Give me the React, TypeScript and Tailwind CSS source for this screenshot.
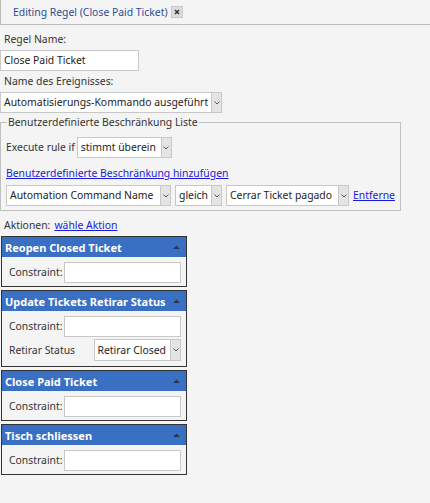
import React from "react";

const font = { fontFamily: '"Noto Sans", "Open Sans", sans-serif' };

function Arrow() {
  return (
    <span className="flex h-full w-[10px] items-center justify-center border-l border-[#c8c8c8] bg-[#e4e4e4]">
      <svg width="6" height="4" viewBox="0 0 6 4">
        <path d="M0.5 0.5 L3 3 L5.5 0.5" fill="none" stroke="#555" strokeWidth="1" />
      </svg>
    </span>
  );
}

function Select({ text, className }: { text: string; className: string }) {
  return (
    <div className={`flex h-[21px] items-stretch border border-[#c8c8c8] bg-white ${className}`}>
      <span className="flex flex-1 items-center overflow-hidden whitespace-nowrap pl-[3px] text-[#222]">{text}</span>
      <Arrow />
    </div>
  );
}

function Input({ text, className }: { text?: string; className: string }) {
  return (
    <div className={`flex h-[21px] items-center border border-[#c8c8c8] bg-white pl-[3px] text-[#222] ${className}`}>
      {text}
    </div>
  );
}

function Panel({ title, children, bodyClass }: { title: string; children: React.ReactNode; bodyClass: string }) {
  return (
    <div className="w-[186px] border border-[#333] bg-[#f4f4f4]">
      <div className="flex h-[20px] items-center justify-between bg-[#3a70c4] pl-[3px] pr-[6px] text-[11px] font-bold text-white">
        <span>{title}</span>
        <svg width="7" height="4" viewBox="0 0 7 4">
          <path d="M0 4 L3.5 0.5 L7 4 Z" fill="#2a3550" />
        </svg>
      </div>
      <div className={`flex flex-col gap-[2px] px-[5px] pt-[5px] ${bodyClass}`}>{children}</div>
    </div>
  );
}

function ConstraintRow() {
  return (
    <div className="flex items-center">
      <span className="w-[59px] pl-[2px] text-[#333]">Constraint:</span>
      <Input className="w-[120px]" />
    </div>
  );
}

export default function App() {
  return (
    <div className="min-h-[503px] w-[430px] bg-[#f4f4f4] text-[10.4px] leading-[15px]" style={font}>
      <div className="flex h-[25px] items-center border-b border-l border-[#bdbdbd] pl-[12px]">
        <span className="text-[#2a4d96]">Editing Regel (Close Paid Ticket)</span>
        <span className="ml-[3px] flex h-[12px] w-[12px] items-center justify-center border border-[#c8c8c8] bg-[#dcdcdc]">
          <svg width="6" height="6" viewBox="0 0 6 6">
            <path d="M1 1 L5 5 M5 1 L1 5" stroke="#333" strokeWidth="1.5" />
          </svg>
        </span>
      </div>

      <div className="pl-[4px] pt-[7px] text-[#333]">Regel Name:</div>
      <Input text="Close Paid Ticket" className="mt-[3px] w-[139px]" />
      <div className="pl-[4px] pt-[3px] text-[#333]">Name des Ereignisses:</div>
      <Select text="Automatisierungs-Kommando ausgeführt" className="mt-[3px] w-[222px]" />

      <fieldset className="mt-[2px] w-[398px] border border-[#c0c0c0] px-[5px] pb-[4px] pt-[3px]">
        <legend className="ml-[1px] px-[1px] text-[#333]">Benutzerdefinierte Beschränkung Liste</legend>
        <div className="flex items-center gap-[2px] pt-[4px]">
          <span className="text-[#333]">Execute rule if</span>
          <Select text="stimmt überein" className="w-[95px]" />
        </div>
        <div className="pt-[8px]">
          <a className="text-[#1a1adb] underline">Benutzerdefinierte Beschränkung hinzufügen</a>
        </div>
        <div className="flex items-center gap-[4px] pt-[4px]">
          <Select text="Automation Command Name" className="w-[165px]" />
          <Select text="gleich" className="w-[47px]" />
          <Select text="Cerrar Ticket pagado" className="w-[123px]" />
          <a className="text-[#1a1adb] underline">Entferne</a>
        </div>
      </fieldset>

      <div className="flex gap-[4px] pl-[4px] pt-[7px]">
        <span className="text-[#333]">Aktionen:</span>
        <a className="text-[#1a1adb] underline">wähle Aktion</a>
      </div>

      <div className="flex flex-col gap-[3px] pl-[1px] pt-[3px]">
        <Panel title="Reopen Closed Ticket" bodyClass="pb-[3px]">
          <ConstraintRow />
        </Panel>
        <Panel title="Update Tickets Retirar Status" bodyClass="pb-[5px]">
          <ConstraintRow />
          <div className="flex items-center">
            <span className="w-[89px] pl-[2px] text-[#333]">Retirar Status</span>
            <Select text="Retirar Closed" className="h-[22px] w-[90px]" />
          </div>
        </Panel>
        <Panel title="Close Paid Ticket" bodyClass="pb-[3px]">
          <ConstraintRow />
        </Panel>
        <Panel title="Tisch schliessen" bodyClass="pb-[3px]">
          <ConstraintRow />
        </Panel>
      </div>
    </div>
  );
}
